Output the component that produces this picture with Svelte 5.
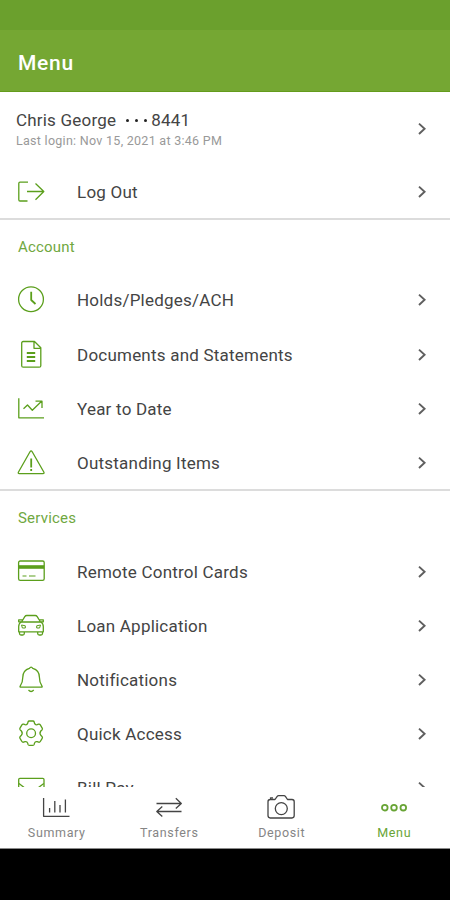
<script lang="ts">
  type Item = { icon: string; label: string };

  const sections: { title: string; items: Item[] }[] = [
    {
      title: "Account",
      items: [
        { icon: "clock", label: "Holds/Pledges/ACH" },
        { icon: "document", label: "Documents and Statements" },
        { icon: "trend", label: "Year to Date" },
        { icon: "warning", label: "Outstanding Items" },
      ],
    },
    {
      title: "Services",
      items: [
        { icon: "card", label: "Remote Control Cards" },
        { icon: "car", label: "Loan Application" },
        { icon: "bell", label: "Notifications" },
        { icon: "gear", label: "Quick Access" },
        { icon: "mail", label: "Bill Pay" },
      ],
    },
  ];

  const tabs: Item[] = [
    { icon: "summary", label: "Summary" },
    { icon: "transfers", label: "Transfers" },
    { icon: "deposit", label: "Deposit" },
    { icon: "menu", label: "Menu" },
  ];

  let activeTab = $state("Menu");
</script>

{#snippet chevron()}
  <svg class="chevron" width="10" height="14" viewBox="0 0 10 14">
    <path d="M2 1.6 7.6 6.8 2 12" />
  </svg>
{/snippet}

{#snippet icon(name: string)}
  <svg class="icon" width="30" height="30" viewBox="0 0 30 30">
    {#if name === "logout"}
      <path d="M12 5.2H4Q2.8 5.2 2.8 6.4V22.8Q2.8 24 4 24H11.5M11 14.5H27.8M19.5 6.5 27.8 14.5 19.5 22.8" />
    {:else if name === "clock"}
      <circle cx="15" cy="14.2" r="12.4" />
      <path class="bold" d="M15.2 6.8V15L19.5 19" />
    {:else if name === "document"}
      <path d="M18.5 1.5H7.2Q5.7 1.5 5.7 3V25.7Q5.7 27.2 7.2 27.2H23.3Q24.8 27.2 24.8 25.7V7.8ZM18 1.8V8.3H24.6" />
      <path class="bold" d="M10.8 13H19.2M10.8 17H19.2M10.8 21H19.2" />
    {:else if name === "trend"}
      <path d="M2.8 4.3V23.8H28" />
      <path d="M7.5 14.8 11.5 11 16.3 16.2 25.6 7.2M19.5 7.2H26V14" />
    {:else if name === "warning"}
      <path d="M14 3.8Q15.1 2 16.2 3.8L27.8 24Q28.6 25.7 27 25.7H3.3Q1.7 25.7 2.5 24Z" />
      <path class="bold" d="M15.2 10.5V19.5M15.2 21V23" />
    {:else if name === "card"}
      <rect x="2.6" y="4" width="25.6" height="19.4" rx="1.6" />
      <path class="fill" d="M2.6 8.2H28.2V11.8H2.6Z" />
      <path class="thin" d="M6.5 19H10.5M13 19H19.5" />
    {:else if name === "car"}
      <path d="M5.5 11 8.8 5.6Q9.5 4.5 10.8 4.5H19.2Q20.5 4.5 21.2 5.6L24.5 11M5.3 11H24.7Q27.3 12.2 27.3 15.5V20.8H2.7V15.5Q2.7 12.2 5.3 11Z" />
      <path d="M5.3 11 2.7 10.8V8.8H5.2L6.8 9M24.7 11 27.3 10.8V8.8H24.8L23.2 9" />
      <path d="M3.5 21V22.5Q3.5 24 5 24H6.8Q8.3 24 8.3 22.5V21M26.5 21V22.5Q26.5 24 25 24H23.2Q21.7 24 21.7 22.5V21" />
      <path class="thin" d="M5.5 14 9.3 14.8V17H6.4ZM24.5 14 20.7 14.8V17H23.6Z" />
    {:else if name === "bell"}
      <path d="M13.4 3.3Q15.1.8 16.8 3.3C21.2 4.5 23.4 8 23.4 12.3 23.4 17 24.6 19.2 26 21.2Q26.6 22.2 25.4 22.2H4.8Q3.6 22.2 4.2 21.2C5.6 19.2 6.8 17 6.8 12.3 6.8 8 9 4.5 13.4 3.3Z" />
      <path d="M12.5 25Q15.1 28 17.7 25" />
    {:else if name === "gear"}
      <path d="M11.7 4.3 12 3Q12.3 2 13.3 2H16.9Q17.9 2 18.2 3L18.5 4.3Q19.2 6.2 21.2 5.7L22.6 5.2Q23.7 4.9 24.3 5.9L26.2 9.1Q26.8 10.1 26 10.9L25 11.8Q22.9 14.2 25 16.6L26 17.5Q26.8 18.3 26.2 19.3L24.3 22.5Q23.7 23.5 22.6 23.2L21.2 22.7Q19.2 22.2 18.5 24.1L18.2 25.4Q17.9 26.4 16.9 26.4H13.3Q12.3 26.4 12 25.4L11.7 24.1Q11 22.2 9 22.7L7.6 23.2Q6.5 23.5 5.9 22.5L4 19.3Q3.4 18.3 4.2 17.5L5.2 16.6Q7.3 14.2 5.2 11.8L4.2 10.9Q3.4 10.1 4 9.1L5.9 5.9Q6.5 4.9 7.6 5.2L9 5.7Q11 6.2 11.7 4.3Z" />
      <circle cx="15.1" cy="14.2" r="4.4" />
    {:else if name === "mail"}
      <rect x="2.7" y="5.4" width="25.3" height="19" rx="1.2" />
      <path d="M3 10.5 15.2 20 27.8 10.5" />
    {:else if name === "summary"}
      <path d="M2.6 6V24.3H28.5" />
      <path d="M8.6 16V20.5M13.8 9V20.5M19 13V20.5M24.4 7.5V20.5" />
    {:else if name === "transfers"}
      <path d="M2.5 11.5H27M21.8 6.3 27.3 11.5 21.8 16.5M27.5 19.5H3M8.3 14.5 2.8 19.5 8.3 24.6" />
    {:else if name === "deposit"}
      <path d="M4.2 7.5H9L11.2 4.3Q11.7 3.7 12.6 3.7H18Q18.9 3.7 19.4 4.3L21.5 7.5H26Q28.2 7.5 28.2 9.7V23.6Q28.2 26 26 26H4.2Q2 26 2 23.6V9.7Q2 7.5 4.2 7.5ZM4.5 7V5.8H7" />
      <circle cx="15.3" cy="16.6" r="6" />
    {:else if name === "menu"}
      <g class="bold">
        <circle cx="5.8" cy="15.7" r="2.8" />
        <circle cx="15" cy="15.7" r="2.8" />
        <circle cx="24.3" cy="15.7" r="2.8" />
      </g>
    {/if}
  </svg>
{/snippet}

<div class="app">
  <div class="status-bar"></div>
  <header class="toolbar">
    <h1>Menu</h1>
  </header>

  <main class="content">
    <button class="profile">
      <span class="who">
        <span class="name">
          Chris George
          <span class="mask"><i></i><i></i><i></i></span>8441
        </span>
        <span class="last-login">Last login: Nov 15, 2021 at 3:46 PM</span>
      </span>
      {@render chevron()}
    </button>

    <button class="row last">
      {@render icon("logout")}
      <span class="label">Log Out</span>
      {@render chevron()}
    </button>

    {#each sections as section (section.title)}
      <h2>{section.title}</h2>
      {#each section.items as item, i (item.label)}
        <button class="row" class:last={i === section.items.length - 1}>
          {@render icon(item.icon)}
          <span class="label">{item.label}</span>
          {@render chevron()}
        </button>
      {/each}
    {/each}
  </main>

  <nav class="tabs">
    {#each tabs as tab (tab.label)}
      <button class="tab" class:active={activeTab === tab.label} onclick={() => (activeTab = tab.label)}>
        {@render icon(tab.icon)}
        <span>{tab.label}</span>
      </button>
    {/each}
  </nav>
  <div class="system-nav"></div>
</div>

<style>
  :global(body) {
    margin: 0;
    background: #000;
  }

  .app {
    display: flex;
    flex-direction: column;
    width: 450px;
    height: 900px;
    overflow: hidden;
    background: #fff;
    font-family: Roboto, "Liberation Sans", sans-serif;
    color: #444;
  }

  button {
    border: 0;
    margin: 0;
    padding: 0;
    background: none;
    font: inherit;
    color: inherit;
    text-align: left;
    cursor: pointer;
  }

  .status-bar {
    flex: none;
    height: 30px;
    background: #6ba02d;
  }

  .toolbar {
    flex: none;
    display: flex;
    align-items: center;
    box-sizing: border-box;
    height: 62px;
    padding: 5px 18px 0;
    background: #75a733;
    border-bottom: 1px solid #649c1c;
  }

  h1 {
    margin: 0;
    font-size: 21px;
    font-weight: 500;
    letter-spacing: 0.7px;
    color: #fff;
  }

  .content {
    flex: 1;
    min-height: 0;
    overflow: hidden;
  }

  .profile {
    display: flex;
    align-items: center;
    box-sizing: border-box;
    width: 100%;
    height: 73.5px;
    padding: 0 23px 0 16px;
  }

  .who {
    flex: 1;
    display: flex;
    flex-direction: column;
    gap: 1px;
    padding-top: 2px;
  }

  .name {
    display: flex;
    align-items: center;
    font-size: 17px;
    line-height: 21px;
    letter-spacing: 0.2px;
  }

  .mask {
    display: flex;
    gap: 6px;
    margin: 0 4px 0 10px;
  }

  .mask i {
    width: 3px;
    height: 3px;
    border-radius: 50%;
    background: #222;
  }

  .last-login {
    font-size: 12.5px;
    line-height: 18px;
    letter-spacing: 0.28px;
    color: #999;
  }

  .row {
    display: flex;
    align-items: center;
    box-sizing: border-box;
    width: 100%;
    height: 54.25px;
    padding: 0 23px 1.6px 16px;
  }

  .row.last {
    padding-bottom: 0;
    border-bottom: 2px solid #dcdcdc;
  }

  .label {
    flex: 1;
    margin-left: 31px;
    font-size: 17px;
    letter-spacing: 0.22px;
  }

  .icon {
    flex: none;
    color: #5b9f1c;
  }

  .icon,
  .chevron {
    fill: none;
    stroke: currentColor;
    stroke-width: 1.3;
    stroke-linejoin: round;
  }

  .icon .bold {
    stroke-width: 1.8;
  }

  .icon .thin {
    stroke-width: 1;
  }

  .icon .fill {
    fill: currentColor;
    stroke: none;
  }

  .chevron {
    flex: none;
    color: #5f5f5f;
    stroke-width: 1.9;
    stroke-linejoin: miter;
  }

  h2 {
    margin: 0;
    padding-left: 18px;
    font-size: 15px;
    font-weight: 400;
    line-height: 54.25px;
    letter-spacing: 0.2px;
    color: #70a83f;
  }

  .tabs {
    flex: none;
    display: grid;
    grid-template-columns: repeat(4, 1fr);
    box-sizing: border-box;
    height: 62px;
    background: #fff;
    border-bottom: 1px solid #8a8a8a;
  }

  .tab {
    display: flex;
    flex-direction: column;
    align-items: center;
    padding-top: 5px;
    font-size: 12.5px;
    line-height: 18px;
    letter-spacing: 0.65px;
    color: #858585;
  }

  .tab .icon {
    color: #444;
  }

  .tab span {
    margin: 2px 0 0 1px;
  }

  .tab.active,
  .tab.active .icon {
    color: #68a435;
  }

  .system-nav {
    flex: none;
    height: 51px;
    background: #000;
  }
</style>
